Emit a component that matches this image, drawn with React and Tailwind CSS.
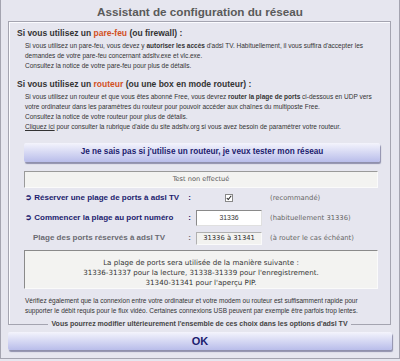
import React from 'react';

function Row({ label, indent, children, note }) {
  return (
    <div className="flex items-center h-[20px]">
      <div className={`w-[167px] flex justify-between font-bold text-[8px] ${indent ? 'pl-[9px] text-[#6a6a72]' : 'pl-[1px] text-[#1c1c6e]'}`}>
        <span>{label}</span>
        <span>:</span>
      </div>
      <div className="w-[66px] ml-[5px] flex items-center justify-center">{children}</div>
      <span className="ml-[8px] font-['DejaVu_Sans',sans-serif] text-[6.8px] text-[#666]">{note}</span>
    </div>
  );
}

export default function App() {
  return (
    <div className="w-[400px] h-[361px] overflow-hidden bg-[#e6e6ef] font-['Liberation_Sans',Arial,sans-serif] text-[#333]">
      <div className="h-[359px] border-x border-b border-[#a4a4b0] flex flex-col">
        {/* Title */}
        <div className="h-[21px] pt-[2px] flex items-center justify-center text-[11.7px] font-bold text-[#5a5a5a]">
          Assistant de configuration du réseau
        </div>

        {/* Fieldset */}
        <div className="ml-[7px] mr-[8px] border-t border-x border-[#a4a4b0] shadow-[inset_1px_1px_0_#fbfbff] pl-[15px] pr-[12px] pt-[6px] flex flex-col">
          <h3 className="-ml-[7px] mb-[2px] text-[8.5px] leading-[11px] font-bold text-[#333]">
            Si vous utilisez un <span className="text-[#d2501e]">pare-feu</span> (ou firewall) :
          </h3>
          <div className="pl-[1px] text-[6.5px] leading-[10px] text-[#333] whitespace-nowrap">
            <p>
              Si vous utilisez un pare-feu, vous devez y <b>autoriser les accès</b> d'adsl TV. Habituellement, il vous suffira d'accepter les
            </p>
            <p>demandes de votre pare-feu concernant adsltv.exe et vlc.exe.</p>
            <p>Consultez la notice de votre pare-feu pour plus de détails.</p>
          </div>

          <h3 className="-ml-[7px] mt-[8px] mb-[2px] text-[8.5px] leading-[11px] font-bold text-[#333]">
            Si vous utilisez un <span className="text-[#d2501e]">routeur</span> (ou une box en mode routeur) :
          </h3>
          <div className="pl-[1px] text-[6.5px] leading-[10px] text-[#333] whitespace-nowrap">
            <p>
              Si vous utilisez un routeur et que vous êtes abonné Free, vous devrez <b>router la plage de ports</b> ci-dessous en UDP vers
            </p>
            <p>votre ordinateur dans les paramètres du routeur pour pouvoir accéder aux chaînes du multiposte Free.</p>
            <p>Consultez la notice de votre routeur pour plus de détails.</p>
            <p>
              <span className="underline">Cliquez ici</span> pour consulter la rubrique d'aide du site adsltv.org si vous avez besoin de paramétrer votre routeur.
            </p>
          </div>

          <button className="mt-[11px] -mr-[2px] h-[19px] rounded-[2px] bg-gradient-to-b from-[#f4f4fc] to-[#b9bdea] shadow-[1px_2px_1px_#8f90ac] text-[8.2px] font-bold text-[#1c1c6e]">
            Je ne sais pas si j'utilise un routeur, je veux tester mon réseau
          </button>

          <div className="mt-[9px] h-[17px] border border-t-[#9a9a9a] border-l-[#9a9a9a] border-b-[#fafafa] border-r-[#fafafa] bg-[#f3f3f1] flex items-center justify-center font-['DejaVu_Sans',sans-serif] text-[6.6px] text-[#555]">
            Test non effectué
          </div>

          <div className="flex flex-col">
            <Row label="➲ Réserver une plage de ports à adsl TV" note="(recommandé)">
              <span className="w-[8px] h-[8px] border border-[#888] bg-white flex items-center justify-center">
                <svg viewBox="0 0 8 8" className="w-[6px] h-[6px]">
                  <path d="M1 4 L3 6 L7 1" fill="none" stroke="#222" strokeWidth="1.4" />
                </svg>
              </span>
            </Row>
            <Row label="➲ Commencer la plage au port numéro" note="(habituellement 31336)">
              <div className="w-full h-[16px] bg-white border border-t-[#8a8a8a] border-l-[#8a8a8a] border-b-[#e0e0e0] border-r-[#e0e0e0] flex items-center justify-center text-[6.8px] text-[#333]">
                31336
              </div>
            </Row>
            <Row label="Plage des ports réservés à adsl TV" indent note="(à router le cas échéant)">
              <div className="w-full h-[13px] bg-[#f2f2f0] border border-t-[#b0b0b0] border-l-[#b0b0b0] border-b-[#fafafa] border-r-[#fafafa] flex items-center justify-center font-['DejaVu_Sans',sans-serif] text-[6.8px] text-[#333]">
                31336 à 31341
              </div>
            </Row>
          </div>

          <div className="mt-[2px] h-[39px] pt-[7px] border border-t-[#8a8a8a] border-l-[#8a8a8a] border-b-[#fafafa] border-r-[#fafafa] bg-[#f3f3f1] text-center font-['DejaVu_Sans',sans-serif] text-[7.1px] leading-[10px] text-[#333]">
            <p>La plage de ports sera utilisée de la manière suivante :</p>
            <p>31336-31337 pour la lecture, 31338-31339 pour l'enregistrement.</p>
            <p>31340-31341 pour l'aperçu PIP.</p>
          </div>

          <div className="mt-[7px] pl-[1px] text-[6.5px] leading-[10px] text-[#333] whitespace-nowrap">
            <p>Vérifiez également que la connexion entre votre ordinateur et votre modem ou routeur est suffisamment rapide pour</p>
            <p>supporter le débit requis pour le flux vidéo. Certaines connexions USB peuvent par exemple être parfois trop lentes.</p>
          </div>

          <div className="-ml-[16px] -mr-[13px] mt-[3px] -mb-[5px] h-[10px] flex items-center">
            <div className="flex-1 h-px bg-[#a4a4b0]" />
            <span className="px-[3px] text-[7px] font-bold text-[#444]">
              Vous pourrez modifier ultérieurement l'ensemble de ces choix dans les options d'adsl TV
            </span>
            <div className="flex-1 h-px bg-[#a4a4b0]" />
          </div>
        </div>

        <button className="ml-[7px] mr-[7px] mt-[8px] h-[18px] rounded-[2px] bg-gradient-to-b from-[#f4f4fc] to-[#b9bdea] shadow-[1px_2px_1px_#8f90ac] text-[11px] font-bold text-[#1c1c6e]">
          OK
        </button>
      </div>
    </div>
  );
}
